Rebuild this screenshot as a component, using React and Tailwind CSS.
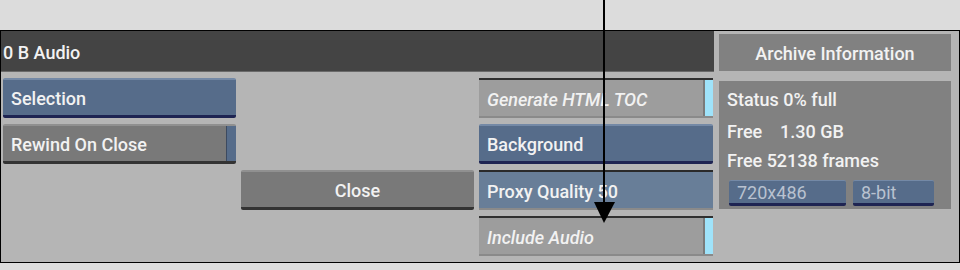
import React from 'react';

const font = { fontFamily: 'Roboto, "Liberation Sans", sans-serif' };

const BlueButton = ({ children }) => (
  <div className="h-[40px] bg-[#566c8a] border-t-2 border-t-[#7489a6] border-b-[3px] border-b-[#1e2452] rounded-[2px] flex items-center px-2 pt-[2px] text-[18px] font-medium text-[#f2f2f2]">
    {children}
  </div>
);

const GrayButton = ({ children, strip = false, center = false }) => (
  <div className="h-[40px] bg-[#797979] border-t-2 border-t-[#909090] border-b-[3px] border-b-[#333333] rounded-[2px] flex text-[18px] font-medium text-[#f2f2f2]">
    <div className={`flex-1 flex items-center px-2 pt-[2px] ${center ? 'justify-center' : ''}`}>{children}</div>
    {strip && <div className="w-[10px] bg-[#566c8a] border-l border-l-[#3c4a60]" />}
  </div>
);

const Toggle = ({ children }) => (
  <div className="h-[40px] bg-[#9d9d9d] border-t-2 border-t-[#303030] border-b-2 border-b-[#8a8a8a] flex text-[18px] font-medium italic text-[#f2f2f2]">
    <div className="flex-1 flex items-center px-2 pt-[2px]">{children}</div>
    <div className="w-[10px] bg-[#9fe3fa] border-l-2 border-l-[#7a7a7a]" />
  </div>
);

const SmallBlue = ({ children, w }) => (
  <div className={`${w} h-[26px] bg-[#566c8a] border-t border-t-[#7489a6] border-b-[3px] border-b-[#1e2452] rounded-[2px] flex items-center px-2 text-[18px] font-normal text-[#b9c2d0]`}>
    {children}
  </div>
);

export default function App() {
  return (
    <div className="relative w-[960px] h-[270px] bg-[#dcdcdc] pt-[30px]" style={font}>
      <div className="h-[233px] bg-[#b5b5b5] border border-black flex">
        {/* left section */}
        <div className="w-[713px] flex flex-col">
          <div className="h-[41px] bg-[#444444] border-b border-b-[#6a6a6a] flex items-center pl-[2px] pt-[3px] text-[18px] font-medium text-[#f2f2f2]">
            0 B Audio
          </div>
          <div className="grid grid-cols-[233px_233px_234px] gap-x-[5px] gap-y-[6px] pl-[2px] pt-[6px]">
            <BlueButton>Selection</BlueButton>
            <div />
            <Toggle>Generate HTML TOC</Toggle>

            <GrayButton strip>Rewind On Close</GrayButton>
            <div />
            <BlueButton>Background</BlueButton>

            <div />
            <GrayButton center>Close</GrayButton>
            <div className="h-[40px] bg-[#687e98] border-t-2 border-t-[#2a2a2a] border-b-2 border-b-[#8a8a8a] flex items-center px-2 pt-[2px] text-[18px] font-medium text-[#f2f2f2]">
              Proxy Quality 50
            </div>

            <div />
            <div />
            <Toggle>Include Audio</Toggle>
          </div>
        </div>

        {/* right section */}
        <div className="w-[232px] ml-[5px] flex flex-col pt-[3px]">
          <div className="h-[37px] bg-[#818181] flex items-center justify-center pt-[2px] text-[18px] font-medium text-[#f2f2f2]">
            Archive Information
          </div>
          <div className="mt-[10px] h-[128px] bg-[#818181] px-2 pt-[8px] text-[18px] font-medium text-[#f2f2f2]">
            <div className="h-[22px] leading-[22px]">Status 0% full</div>
            <div className="h-[22px] leading-[22px] mt-[10px]">Free&nbsp;&nbsp;&nbsp;&nbsp;1.30 GB</div>
            <div className="h-[22px] leading-[22px] mt-[7px]">Free 52138 frames</div>
            <div className="flex gap-[7px] mt-[8px] pl-[2px]">
              <SmallBlue w="w-[117px]">720x486</SmallBlue>
              <SmallBlue w="w-[81px]">8-bit</SmallBlue>
            </div>
          </div>
        </div>
      </div>

      {/* callout arrow */}
      <svg className="absolute left-0 top-0 pointer-events-none" width="960" height="270">
        <line x1="604" y1="0" x2="604" y2="204" stroke="#000" strokeWidth="2" />
        <polygon points="594,202 615,202 604,223" fill="#000" />
      </svg>
    </div>
  );
}
